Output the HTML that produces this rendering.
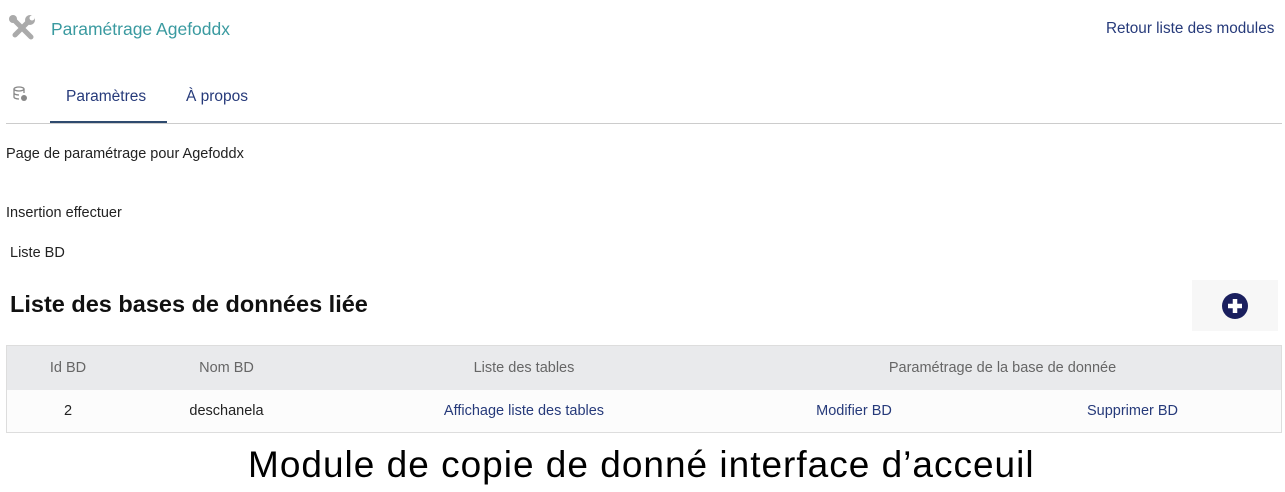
<!DOCTYPE html>
<html><head><meta charset="utf-8"><style>
body{margin:0;width:1285px;height:492px;background:#fff;font-family:"Liberation Sans",sans-serif;position:relative;overflow:hidden;color:#222}
.a{position:absolute;white-space:nowrap}
.link{color:#263a7a}
table{position:absolute;left:6px;top:345px;width:1276px;border-collapse:collapse;border:1px solid #ddd;font-size:14.5px}
th{background:#e9eaec;height:44px;font-weight:normal;color:#666;padding:0}
td{height:42px;text-align:center;background:#fcfcfc;padding:0}
</style></head><body>
<svg class="a" style="left:8px;top:14px" width="28" height="28" viewBox="0 0 28 28"><g stroke="#aaa" stroke-width="5" stroke-linecap="round"><line x1="5" y1="5" x2="23" y2="23"/><line x1="23" y1="5" x2="7" y2="21"/></g><circle cx="22" cy="6" r="5" fill="#aaa"/><circle cx="24" cy="4" r="2.5" fill="#fff"/><circle cx="5" cy="5" r="4" fill="#aaa"/></svg>
<div class="a" style="left:51px;top:19px;font-size:17.5px;color:#3a9aa0">Paramétrage Agefoddx</div>
<div class="a link" style="left:1106px;top:20px;font-size:15.3px">Retour liste des modules</div>
<svg class="a" style="left:12px;top:86px" width="16" height="16" viewBox="0 0 16 16"><g fill="none" stroke="#888" stroke-width="1.3"><ellipse cx="7" cy="3" rx="5" ry="2"/><path d="M2 3v8c0 1 2 2 5 2M12 3v4M2 7c0 1 2 2 5 2"/></g><circle cx="12" cy="12" r="3" fill="#888"/></svg>
<div class="a link" style="left:66px;top:88px;font-size:15.5px">Paramètres</div>
<div class="a link" style="left:186px;top:88px;font-size:15.5px">À propos</div>
<div class="a" style="left:50px;top:121px;width:117px;height:3px;background:#2e4a6e"></div>
<div class="a" style="left:6px;top:123px;width:1276px;height:1px;background:#ccc"></div>
<div class="a" style="left:6px;top:146px;font-size:14.5px">Page de paramétrage pour Agefoddx</div>
<div class="a" style="left:6px;top:205px;font-size:14.5px">Insertion effectuer</div>
<div class="a" style="left:10px;top:245px;font-size:14.5px">Liste BD</div>
<div class="a" style="left:10px;top:291px;font-size:23.5px;font-weight:bold;color:#111">Liste des bases de données liée</div>
<div class="a" style="left:1192px;top:280px;width:86px;height:51px;background:#f7f7f7"></div>
<svg class="a" style="left:1222px;top:293px" width="26" height="26" viewBox="0 0 26 26"><circle cx="13" cy="13" r="13" fill="#1a1f5e"/><path d="M13 6v14M6 13h14" stroke="#fff" stroke-width="4.5"/></svg>
<table><tr><th style="width:122px">Id BD</th><th style="width:195px">Nom BD</th><th style="width:400px">Liste des tables</th><th colspan="2">Paramétrage de la base de donnée</th></tr>
<tr><td>2</td><td>deschanela</td><td class="link">Affichage liste des tables</td><td class="link" style="width:260px">Modifier BD</td><td class="link">Supprimer BD</td></tr></table>
<div class="a" style="left:248px;top:444px;font-size:37px;color:#000;letter-spacing:1px">Module de copie de donné interface d’acceuil</div>
</body></html>
